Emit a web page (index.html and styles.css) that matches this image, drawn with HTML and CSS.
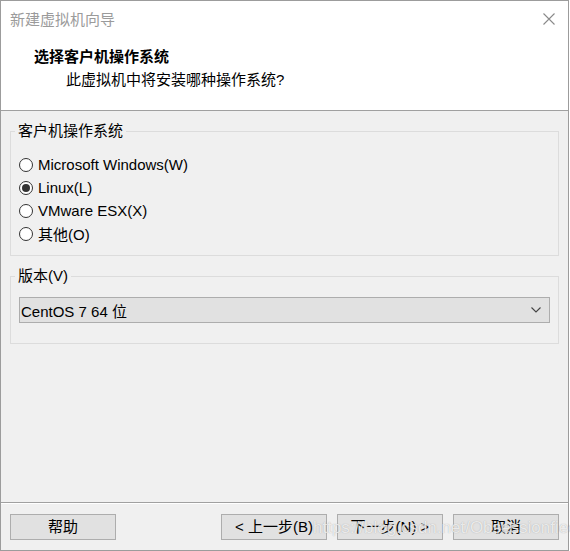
FILE: index.html
```html
<!DOCTYPE html>
<html lang="zh-CN">
<head>
<meta charset="utf-8">
<title>新建虚拟机向导</title>
<link rel="stylesheet" href="styles.css">
</head>
<body>
<div class="window">
  <header class="header">
    <div class="titlebar">
      <span class="title">新建虚拟机向导</span>
      <svg class="close" width="12" height="12" viewBox="0 0 12 12"><path d="M0.5 0.5 L11.5 11.5 M11.5 0.5 L0.5 11.5" stroke="#8a8a8a" stroke-width="1.1" fill="none"/></svg>
    </div>
    <div class="heading">选择客户机操作系统</div>
    <div class="subheading">此虚拟机中将安装哪种操作系统?</div>
  </header>
  <main class="content">
    <fieldset class="group">
      <legend class="legend">客户机操作系统</legend>
      <div class="group-body group-os">
        <div class="radio-row"><span class="radio"></span><span class="radio-label">Microsoft Windows(W)</span></div>
        <div class="radio-row"><span class="radio checked"></span><span class="radio-label">Linux(L)</span></div>
        <div class="radio-row"><span class="radio"></span><span class="radio-label">VMware ESX(X)</span></div>
        <div class="radio-row"><span class="radio"></span><span class="radio-label">其他(O)</span></div>
      </div>
    </fieldset>
    <fieldset class="group group-gap">
      <legend class="legend">版本(V)</legend>
      <div class="group-body group-ver">
        <div class="select">
          <span class="select-text">CentOS 7 64 位</span>
          <svg class="chevron" width="10" height="6" viewBox="0 0 10 6"><path d="M0.5 0.5 L5 5 L9.5 0.5" stroke="#444" stroke-width="1.1" fill="none"/></svg>
        </div>
      </div>
    </fieldset>
  </main>
  <footer class="footer">
    <button class="btn">帮助</button>
    <div class="spacer"></div>
    <button class="btn">&lt; 上一步(B)</button>
    <button class="btn">下一步(N) &gt;</button>
    <button class="btn">取消</button>
    <span class="watermark">https://blog.csdn.net/Obsessionfiee</span>
  </footer>
</div>
</body>
</html>
```
FILE: styles.css
```css
html, body {
  margin: 0;
  padding: 0;
  background: #ffffff;
}
body {
  font-family: "Liberation Sans", "Noto Sans CJK SC", sans-serif;
  font-size: 15px;
  color: #000;
}
.window {
  width: 569px;
  height: 551px;
  box-sizing: border-box;
  border: 1px solid #9c9c9c;
  display: flex;
  flex-direction: column;
  background: #f0f0f0;
}
.header {
  background: #ffffff;
  height: 110px;
  box-sizing: border-box;
  border-bottom: 1px solid #a0a0a0;
  flex: none;
}
.titlebar {
  height: 37px;
  display: flex;
  align-items: center;
  justify-content: space-between;
  padding: 0 13px 0 9px;
}
.title {
  color: #9b9b9b;
  line-height: 37px;
}
.close {
  display: block;
  margin-bottom: 1px;
}
.heading {
  margin-top: 7px;
  padding-left: 33px;
  font-weight: bold;
  line-height: 23px;
}
.subheading {
  padding-left: 65px;
  line-height: 23px;
}
.content {
  flex: 1;
  padding: 11px 9px 0 9px;
}
.group {
  margin: 0;
  border: 1px solid #dcdcdc;
  padding: 0;
  min-width: 0;
}
.group-gap {
  margin-top: 11px;
}
.legend {
  margin-left: 4px;
  padding: 0 3px;
  line-height: 18px;
}
.group-os {
  padding: 13px 0 10px 8px;
}
.group-ver {
  padding: 12px 8px 20px 8px;
}
.radio-row {
  display: flex;
  align-items: center;
  height: 23px;
}
.radio {
  flex: none;
  width: 14px;
  height: 14px;
  box-sizing: border-box;
  border: 1px solid #333;
  border-radius: 50%;
  background: #fff;
  margin-right: 5px;
  display: flex;
  align-items: center;
  justify-content: center;
}
.radio.checked::after {
  content: "";
  width: 8px;
  height: 8px;
  border-radius: 50%;
  background: #333;
}
.select {
  height: 26px;
  box-sizing: border-box;
  border: 1px solid #adadad;
  background: #e1e1e1;
  display: flex;
  align-items: center;
  justify-content: space-between;
  padding: 0 8px 0 1px;
}
.chevron {
  display: block;
}
.footer {
  flex: none;
  position: relative;
  border-top: 1px solid #a0a0a0;
  box-shadow: inset 0 1px 0 #ffffff;
  height: 48px;
  box-sizing: border-box;
  padding: 11px 9px 0 9px;
  display: flex;
  align-items: flex-start;
  gap: 10px;
}
.spacer {
  flex: 1;
}
.btn {
  width: 106px;
  height: 26px;
  box-sizing: border-box;
  border: 1px solid #adadad;
  background: #e1e1e1;
  font-family: "Liberation Sans", "Noto Sans CJK SC", sans-serif;
  font-size: 15px;
  color: #000;
  padding: 0;
  line-height: 22px;
}
.watermark {
  position: absolute;
  left: 312px;
  top: 15px;
  font-size: 17px;
  font-family: "Liberation Sans", sans-serif;
  color: rgba(255, 255, 255, 0.75);
  text-shadow: 0 0 1px rgba(120, 120, 120, 0.6);
  pointer-events: none;
  white-space: nowrap;
}
```
